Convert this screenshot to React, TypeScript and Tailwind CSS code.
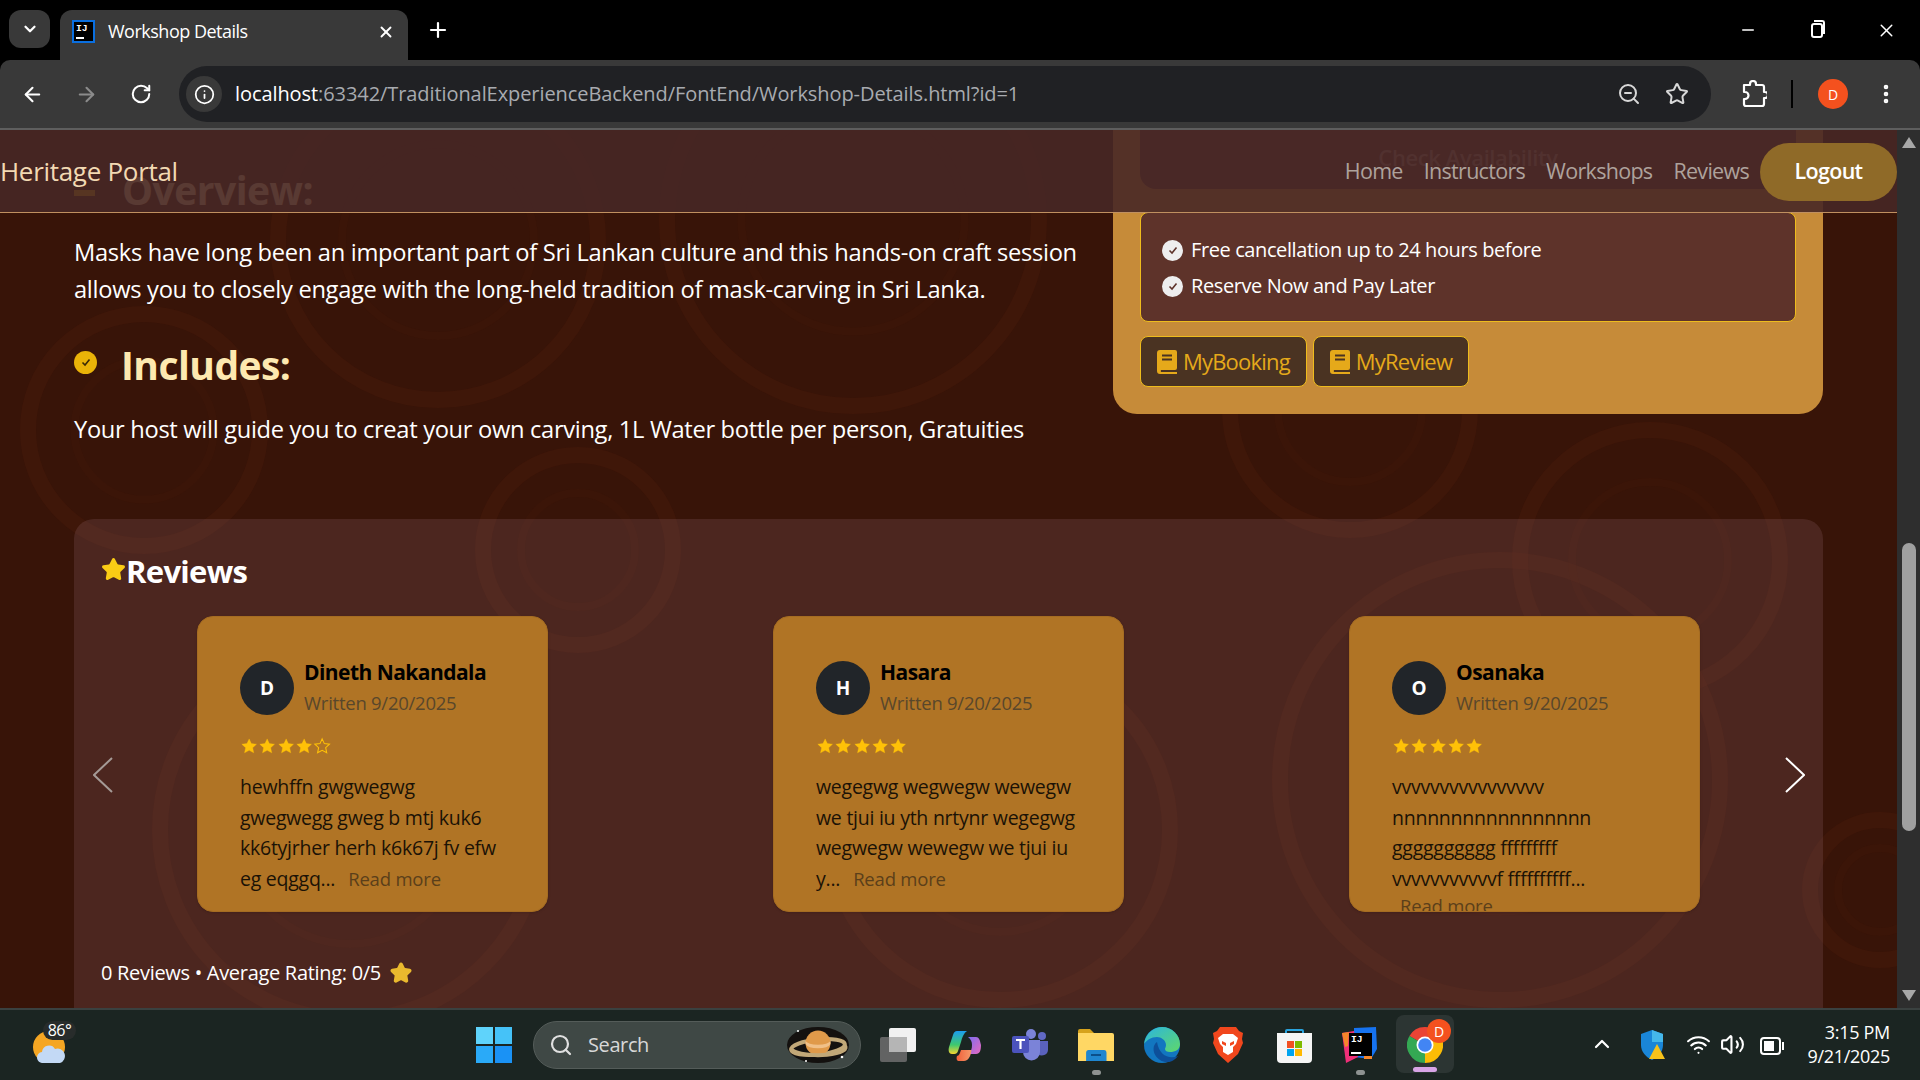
import { ArrowLeft, ArrowRight, ChevronDown, ChevronUp, Info, MoreVertical, Plus, RotateCw, Search, Star, Volume2, Wifi, X, ZoomOut, Minus } from 'lucide-react';
import type { ReactNode } from 'react';

const rings = [
  [438, 110, 160], [853, 90, 186], [144, 300, 116], [578, 420, 95], [1880, 760, 70],
  [350, 700, 190], [1000, 700, 170], [1500, 650, 220], [1650, 430, 130], [1350, 280, 120],
];

function Background() {
  return (
    <svg className="absolute inset-0 w-full h-full" viewBox="0 0 1897 878" preserveAspectRatio="none">
      {rings.map(([cx, cy, r], i) => (
        <g key={i} fill="none">
          <circle cx={cx} cy={cy} r={r} stroke="#4a1a0a" strokeWidth="16" opacity="0.45" />
          <circle cx={cx} cy={cy} r={r * 0.6} stroke="#451808" strokeWidth="8" opacity="0.25" />
        </g>
      ))}
    </svg>
  );
}

function IdeaIcon({ size, blue }: { size: number; blue?: boolean }) {
  return (
    <div
      className={`flex flex-col justify-between bg-black text-white font-bold leading-none p-[2px] font-['Liberation_Mono',monospace] ${blue ? 'border-2 border-[#0a6fe0]' : ''}`}
      style={{ width: size, height: size, fontSize: size * 0.42 }}
    >
      <span>IJ</span>
      <span className="block w-1/2 h-[2px] bg-white" />
    </div>
  );
}

function Chevron({ right, color }: { right?: boolean; color: string }) {
  return (
    <svg width="20" height="36" viewBox="0 0 20 36" className="mt-[22px] shrink-0">
      <path d={right ? 'M1 1 19 18 1 35' : 'M19 1 1 18 19 35'} fill="none" stroke={color} strokeWidth="2" />
    </svg>
  );
}

function RatingStar({ filled }: { filled: boolean }) {
  return (
    <svg width="18.300" height="18" viewBox="0 0 24 24">
      <path
        d="M12 2.500l2.900 6.300 6.900.8-5.100 4.700 1.400 6.800-6.100-3.400-6.100 3.400 1.400-6.800L2.200 9.600l6.900-.8z"
        fill={filled ? '#ffc107' : 'none'}
        stroke="#ffc107"
        strokeWidth={filled ? 0.5 : 1.4}
      />
    </svg>
  );
}

function ReviewCard({ initial, name, stars, lines, more, clipped }: { initial: string; name: string; stars: number; lines: string[]; more?: boolean; clipped?: boolean }) {
  return (
    <div className="w-[351px] h-[296px] rounded-[16px] bg-[#b07425] border border-[#a56c22] overflow-hidden pl-[42px] pt-[42px] shadow-sm">
      <div className="flex gap-[10px] h-[64px]">
        <div className="w-[54px] h-[54px] mt-[2px] rounded-full bg-[#212529] text-white font-bold text-[19px] flex items-center justify-center">{initial}</div>
        <div>
          <div className="text-[21px] leading-[26px] font-bold text-black tracking-[-0.55px]">{name}</div>
          <div className="text-[18.5px] leading-[26px] mt-[5px] text-[#59472b] tracking-[-0.25px]">Written 9/20/2025</div>
        </div>
      </div>
      <div className="flex mt-[11px] h-[24px] items-center">
        {[0, 1, 2, 3, 4].map((i) => (
          <RatingStar key={i} filled={i < stars} />
        ))}
      </div>
      <div className="mt-[14px] text-[19.5px] leading-[30.6px] text-[#1b1206] tracking-[-0.25px]">
        {lines.map((l, i) => (
          <div key={i} className="whitespace-nowrap">
            {l}
            {more && i === lines.length - 1 && <span className="ml-[13px] text-[18.5px] text-[#5b3f1a] tracking-[-0.2px]">Read more</span>}
          </div>
        ))}
        {clipped && <div className="ml-[8px] text-[18.5px] leading-[24px] text-[#5b3f1a] tracking-[-0.2px]">Read more</div>}
      </div>
    </div>
  );
}

function CheckRow({ children }: { children: ReactNode }) {
  return (
    <div className="flex items-center gap-[8px] h-[36px]">
      <div className="w-[21px] h-[21px] rounded-full bg-[#eeeeee] flex items-center justify-center">
        <svg width="12" height="12" viewBox="0 0 12 12"><path d="M2.5 6.5 5 9l4.5-5.5" fill="none" stroke="#5e332a" strokeWidth="1.6" /></svg>
      </div>
      {children}
    </div>
  );
}

// one slot on the taskbar, 66px apart, optional running dot under the icon
function TaskSlot({ children, dot }: { children: ReactNode; dot?: boolean }) {
  return (
    <div className="relative w-[66px] h-full flex items-center justify-center">
      {children}
      {dot && <span className="absolute bottom-[5px] left-[29px] w-[9px] h-[5px] rounded-full bg-[#8e9291]" />}
    </div>
  );
}

export default function App() {
  return (
    <div className="w-[1920px] h-[1080px] overflow-hidden flex flex-col bg-black font-['Open_Sans','Noto_Sans',sans-serif]">
      {/* Tab strip */}
      <div className="h-[60px] flex shrink-0 bg-black">
        <div className="w-[41px] h-[38px] mt-[10px] ml-[9px] rounded-[12px] bg-[#393939] flex items-center justify-center">
          <ChevronDown size={18} strokeWidth={3} className="text-white" />
        </div>
        <div className="w-[348px] h-[50px] mt-[10px] ml-[10px] pb-[7px] rounded-t-[12px] bg-[#393939] flex items-center pl-[12px] pr-[10px]">
          <IdeaIcon size={23} blue />
          <span className="ml-[13px] text-[18px] text-white tracking-[-0.5px]">Workshop Details</span>
          <X size={18} strokeWidth={2.5} className="text-white ml-auto mr-[3px]" />
        </div>
        <Plus size={24} strokeWidth={2.2} className="text-white mt-[18px] ml-[18px]" />
        <div className="ml-auto flex items-start text-white">
          <div className="w-[68px] h-[44px] flex items-center justify-center mt-[8px]"><Minus size={18} /></div>
          <div className="w-[70px] h-[44px] flex items-center justify-center mt-[8px]">
            <div className="relative w-[12px] h-[15px] border-2 border-white rounded-[3px] mt-[1px]">
              <span className="absolute -top-[5px] left-[1px] w-[11px] h-[14px] border-t-2 border-r-2 border-white rounded-tr-[3px]" />
            </div>
          </div>
          <div className="w-[68px] h-[44px] flex items-center justify-center mt-[8px]"><X size={21} strokeWidth={1.7} /></div>
        </div>
      </div>

      {/* Toolbar */}
      <div className="h-[70px] shrink-0 rounded-t-[10px] bg-[#393939] border-b-2 border-[#5e5e5e] flex items-center pl-[21px] pr-[20px] text-white">
        <ArrowLeft size={23} strokeWidth={2.2} />
        <ArrowRight size={23} strokeWidth={2.2} className="ml-[31px] text-[#8b8b8b]" />
        <RotateCw size={22} strokeWidth={2.2} className="ml-[32px]" />
        <div className="ml-[27px] w-[1532px] h-[56px] rounded-full bg-[#202124] flex items-center pl-[6px] pr-[22px]">
          <div className="w-[36px] h-[36px] ml-[1px] rounded-full bg-[#393939] flex items-center justify-center"><Info size={21} strokeWidth={2} /></div>
          <span className="ml-[13px] text-[20px] tracking-[-0.08px] text-white">localhost<span className="text-[#a8abb0]">:63342/TraditionalExperienceBackend/FontEnd/Workshop-Details.html?id=1</span></span>
          <ZoomOut size={24} strokeWidth={2} className="ml-auto text-[#d8d8d8]" />
          <Star size={24} strokeWidth={2} className="ml-[24px] text-[#d8d8d8]" />
        </div>
        <svg className="ml-[30px]" width="26" height="28" viewBox="0 0 26 28">
          <path d="M3 5h6V4a3 3 0 0 1 6 0v1h6a2 2 0 0 1 2 2v5h1a2.5 2.5 0 0 1 0 6h-1v6a2 2 0 0 1-2 2H5a2 2 0 0 1-2-2v-5h1a3 3 0 0 0 0-7H3z" fill="none" stroke="#fff" strokeWidth="2.2" strokeLinejoin="round" />
        </svg>
        <span className="ml-[24px] w-[2px] h-[28px] bg-black" />
        <div className="ml-[25px] w-[30px] h-[30px] rounded-full bg-[#f4511e] flex items-center justify-center text-[14px]">D</div>
        <MoreVertical size={24} strokeWidth={2.6} className="ml-[26px]" />
      </div>

      {/* Page */}
      <div className="flex-1 min-h-0 flex">
        <div className="relative flex-1 overflow-hidden bg-[#381408]">
          <Background />

          <div className="relative pl-[74px] pr-[74px]">
            <div className="flex justify-between items-start">
              <div className="w-[1010px] pt-[35px]">
                <div className="flex items-center h-[50px]">
                  <span className="w-[21px] h-[6px] mt-[6px] bg-[#eab308]" />
                  <span className="ml-[27px] text-[39px] font-bold text-[#fde9b0] tracking-[-0.5px]">Overview:</span>
                </div>
                <p className="mt-[19px] text-[23.7px] leading-[36.7px] text-white tracking-[-0.3px]">
                  Masks have long been an important part of Sri Lankan culture and this hands-on craft session allows you to closely engage with the long-held tradition of mask-carving in Sri Lanka.
                </p>
                <div className="flex items-center mt-[33px] h-[50px]">
                  <div className="w-[23px] h-[23px] mt-[-6px] rounded-full bg-[#eab308] flex items-center justify-center">
                    <svg width="12" height="12" viewBox="0 0 12 12"><path d="M2.5 6.5 5 9l4.5-5.5" fill="none" stroke="#3a2a05" strokeWidth="1.6" /></svg>
                  </div>
                  <h2 className="ml-[24px] text-[39px] font-bold text-[#fde9b0] tracking-[-0.55px]">Includes:</h2>
                </div>
                <p className="mt-[21px] text-[23.7px] leading-[36.7px] text-white tracking-[-0.32px]">
                  Your host will guide you to creat your own carving, 1L Water bottle per person, Gratuities
                </p>
              </div>

              <div className="w-[710px] h-[284px] rounded-b-[24px] bg-[#c68b39] px-[27px]">
                <div className="h-[59px] rounded-b-[16px] bg-[#5c3329] pt-[11px] text-center text-[#a89088] text-[22px] font-semibold tracking-[-0.4px]">Check Availability</div>
                <div className="mt-[23px] h-[110px] rounded-[8px] border border-[#eebc1d] bg-[#5e332a] pl-[21px] pt-[19px] text-white text-[20px] tracking-[-0.4px]">
                  <CheckRow>Free cancellation up to 24 hours before</CheckRow>
                  <CheckRow>Reserve Now and Pay Later</CheckRow>
                </div>
                <div className="flex gap-[6px] mt-[14px]">
                  {['MyBooking', 'MyReview'].map((label) => (
                    <div key={label} className="h-[51px] px-[16px] rounded-[8px] border border-[#eebc1d] bg-[#4a3322] text-[#e5a91a] text-[22px] tracking-[-0.8px] flex items-center gap-[6px]">
                      <svg width="20" height="24" viewBox="0 0 20 24">
                        <path d="M3 0h15a2 2 0 0 1 2 2v16a2 2 0 0 1-2 2H4a2 2 0 0 0 0 2h16v2H3a3 3 0 0 1-3-3V3a3 3 0 0 1 3-3z" fill="#e5a91a" />
                        <path d="M5 5.5h10M5 9.5h10" stroke="#4a3322" strokeWidth="2" />
                      </svg>
                      {label}
                    </div>
                  ))}
                </div>
              </div>
            </div>

            {/* Reviews panel */}
            <div className="mt-[71px] h-[560px] rounded-[20px] bg-[#ffd2eb]/10 pl-[27px]">
              <h2 className="pt-[32px] flex items-center text-[31px] leading-[40px] font-bold text-white tracking-[-0.7px]">
                <Star size={25} fill="#facc15" className="text-[#facc15] -mt-[4px]" />
                Reviews
              </h2>
              <div className="flex items-center mt-[25px] -ml-[27px]">
                <div className="ml-[19px]"><Chevron color="#a59a96" /></div>
                <div className="ml-[84px] flex gap-[225px]">
                  <ReviewCard initial="D" name="Dineth Nakandala" stars={4} more lines={['hewhffn gwgwegwg', 'gwegwegg gweg b mtj kuk6', 'kk6tyjrher herh k6k67j fv efw', 'eg eqggq...']} />
                  <ReviewCard initial="H" name="Hasara" stars={5} more lines={['wegegwg wegwegw wewegw', 'we tjui iu yth nrtynr wegegwg', 'wegwegw wewegw we tjui iu', 'y...']} />
                  <ReviewCard initial="O" name="Osanaka" stars={5} clipped lines={['vvvvvvvvvvvvvvvv', 'nnnnnnnnnnnnnnnnn', 'gggggggggg fffffffff', 'vvvvvvvvvvvf ffffffffff...']} />
                </div>
                <div className="ml-[85px]"><Chevron right color="#ffffff" /></div>
              </div>
              <div className="mt-[46px] flex items-center text-[20px] text-white tracking-[-0.3px]">
                0 Reviews • Average Rating: 0/5
                <Star size={22} fill="#eab92e" strokeLinejoin="round" strokeWidth={3} className="ml-[9px] text-[#eab92e]" />
              </div>
            </div>
          </div>

          {/* Translucent fixed nav */}
          <div className="absolute top-0 left-0 right-0 h-[83px] bg-[#472726]/90 border-b border-[#c09060] flex items-center">
            <span className="text-[26px] text-[#f2d9b3] tracking-[-0.3px]">Heritage Portal</span>
            <div className="ml-auto flex items-center text-[21.5px] text-[#aea29c] tracking-[-0.7px]">
              <span>Home</span>
              <span className="ml-[21px]">Instructors</span>
              <span className="ml-[21px]">Workshops</span>
              <span className="ml-[21px]">Reviews</span>
              <div className="ml-[11px] mt-[1px] w-[137px] h-[58px] rounded-full bg-[#8f6a28] text-white font-semibold flex items-center justify-center">Logout</div>
            </div>
          </div>
        </div>

        {/* Scrollbar */}
        <div className="w-[23px] shrink-0 bg-[#2e2e2e] flex flex-col items-center py-[4px] text-[#a8a8a8]">
          <div className="w-0 h-0 border-x-[7px] border-x-transparent border-b-[11px] border-b-[#a8a8a8] mt-[3px]" />
          <div className="w-[14px] h-[288px] mt-[395px] rounded-full bg-[#a0a0a0]" />
          <div className="w-0 h-0 border-x-[7px] border-x-transparent border-t-[11px] border-t-[#a8a8a8] mt-auto mb-[3px]" />
        </div>
      </div>

      {/* Taskbar */}
      <div className="h-[72px] shrink-0 bg-[#1b2522] border-t-2 border-[#3a4140] flex items-center relative text-white">
        <div className="relative ml-[32px] w-[36px] h-[50px]">
          <div className="absolute left-[1px] top-[11px] w-[32px] h-[32px] rounded-full bg-[#f5a623]" />
          <svg className="absolute left-[5px] top-[23px]" width="28" height="20" viewBox="0 0 28 20">
            <path d="M6 20a5.500 5.500 0 0 1-1-11 7 7 0 0 1 13-3 6.500 6.500 0 0 1 5 14z" fill="#c3d9f5" />
          </svg>
          <span className="absolute left-[11px] top-[1px] w-[33px] h-[19px] rounded-full bg-[#282c2b] text-[16px] leading-[19px] text-center tracking-[-0.5px]">86°</span>
        </div>

        {/* Windows logo */}
        <div className="ml-[393px] w-[66px] flex justify-center">
          <div className="grid grid-cols-2 gap-[2px] w-[36px] h-[36px]">
            <span className="bg-[#5fd3fb]" />
            <span className="bg-[#45c2f8]" />
            <span className="bg-[#2aaaf8]" />
            <span className="bg-[#1a92f5]" />
          </div>
        </div>

        <div className="ml-[6px] w-[328px] h-[48px] rounded-full bg-[#3f4845] border border-[#545c59] flex items-center pl-[15px] pr-[8px]">
          <Search size={24} strokeWidth={2.2} className="text-[#e0e0e0]" />
          <span className="ml-[15px] text-[20px] text-[#d8d8d8] tracking-[-0.4px]">Search</span>
          <svg className="ml-auto" width="68" height="44" viewBox="0 0 68 44">
            <ellipse cx="34" cy="22" rx="31" ry="18" fill="#14110f" />
            <ellipse cx="34" cy="24" rx="27" ry="7.500" fill="none" stroke="#c2a878" strokeWidth="4" transform="rotate(-6 34 24)" />
            <circle cx="34" cy="20" r="12.500" fill="#e09a4a" />
            <path d="M21.500 18a13 5 0 0 0 25 0v3a13 6 0 0 1-25 0z" fill="#f0c088" />
            <path d="M8 27a27 7.500 0 0 0 52-5" fill="none" stroke="#c2a878" strokeWidth="4" />
            <circle cx="14" cy="8" r="1" fill="#fff" /><circle cx="58" cy="34" r="1.300" fill="#fff" /><circle cx="22" cy="38" r="1" fill="#fff" />
          </svg>
        </div>

        <div className="ml-[4px] h-full flex">
          {/* Task view */}
          <TaskSlot>
            <svg width="36" height="34" viewBox="0 0 36 34">
              <rect x="9" y="0" width="27" height="24" rx="2" fill="#f1f1f1" />
              <rect x="0" y="9" width="27" height="25" rx="2" fill="#6a6a6a" fillOpacity="0.9" />
              <rect x="9" y="9" width="18" height="15" fill="#b5b5b5" />
            </svg>
          </TaskSlot>
          {/* Copilot */}
          <TaskSlot>
            <svg width="33" height="31" viewBox="0 0 33 31">
              <defs>
                <linearGradient id="cpa" x1="0" y1="0" x2="0" y2="1"><stop offset="0" stopColor="#1c9cf0" /><stop offset="0.6" stopColor="#3ec86e" /><stop offset="1" stopColor="#f5d531" /></linearGradient>
                <linearGradient id="cpb" x1="0" y1="0" x2="1" y2="1"><stop offset="0" stopColor="#7c6cf0" /><stop offset="1" stopColor="#e86ac0" /></linearGradient>
                <linearGradient id="cpc" x1="0" y1="0" x2="1" y2="0"><stop offset="0" stopColor="#f0603a" /><stop offset="1" stopColor="#f59a6a" /></linearGradient>
              </defs>
              <path d="M9 1h10c-3 2-5 6-6 11l-3 9c-1 3-3 3-5 3H4c-3 0-4-3-3-7L5 5c1-3 2-4 4-4z" fill="url(#cpa)" />
              <path d="M20 7h8c3 0 4 3 5 8 0 5-1 9-5 9h-8c3-2 4-5 4-9 0-3-1-6-4-8z" fill="url(#cpb)" />
              <path d="M13 20h10c1 0 0 1 0 3-1 4-3 8-7 8h-5c-2 0-3-2-2-5 2 0 3-3 4-6z" fill="url(#cpc)" />
            </svg>
          </TaskSlot>
          {/* Teams */}
          <TaskSlot>
            <svg width="36" height="32" viewBox="0 0 36 32">
              <circle cx="19" cy="5" r="5" fill="#7b83d8" />
              <circle cx="30" cy="7" r="4" fill="#6068c4" />
              <path d="M25 12h11v9a6 6 0 0 1-10 4z" fill="#5a62bd" />
              <path d="M11 11h17v12a8.500 8.500 0 0 1-17 0z" fill="#7b83d8" />
              <rect x="0" y="7" width="17" height="17" rx="2" fill="#4b53bc" />
              <path d="M4 11h9M8.500 11v9" stroke="#fff" strokeWidth="2.2" />
            </svg>
          </TaskSlot>
          {/* Explorer */}
          <TaskSlot dot>
            <svg width="36" height="32" viewBox="0 0 36 32">
              <path d="M0 2a2 2 0 0 1 2-2h10l4 4v3H0z" fill="#d6a21c" />
              <path d="M0 4h34a2 2 0 0 1 2 2v26H0z" fill="#ffd764" />
              <path d="M6 32v-8a3 3 0 0 1 3-3h18a3 3 0 0 1 3 3v8z" fill="#1f86d0" transform="translate(3 0) scale(0.85 1)" />
              <rect x="13" y="25" width="10" height="2" fill="#0b4f8a" />
            </svg>
          </TaskSlot>
          {/* Edge */}
          <TaskSlot>
            <svg width="36" height="36" viewBox="0 0 36 36">
              <defs>
                <linearGradient id="edg" x1="0" y1="0" x2="1" y2="1"><stop offset="0" stopColor="#2bb5e0" /><stop offset="1" stopColor="#5fd86a" /></linearGradient>
              </defs>
              <circle cx="18" cy="18" r="18" fill="#1276c0" />
              <path d="M0 17C2 5 11 0 18 0c10 0 18 8 18 17 0 6-5 8-10 8-3 0-5-1-5-3 0-1 1-2 1-4 0-5-5-8-9-8-6 0-10 3-13 7z" fill="url(#edg)" />
              <path d="M13 15c-5 3-5 13 3 18 6 4 14 2 18-4-9 4-19-1-21-14z" fill="#0d4f9a" />
            </svg>
          </TaskSlot>
          {/* Brave */}
          <TaskSlot>
            <svg width="30" height="36" viewBox="0 0 30 36">
              <path d="M7 0h16l3 4 4 2-1 6 1 4-5 11-10 9-10-9L0 16l1-4L0 6l4-2z" fill="#f1471d" />
              <path d="M5 11l5-4h10l5 4-2 6-3 3v5l-5 3-5-3v-5l-3-3z" fill="#fff" />
              <path d="M9 14l4 2v3l-4-2zM21 14l-4 2v3l4-2z" fill="#f1471d" />
            </svg>
          </TaskSlot>
          {/* Store */}
          <TaskSlot>
            <svg width="35" height="35" viewBox="0 0 35 35">
              <path d="M9 7V3a1 1 0 0 1 1-1h15a1 1 0 0 1 1 1v4" fill="none" stroke="#2aa3dd" strokeWidth="2" />
              <path d="M0 5h35v26a4 4 0 0 1-4 4H4a4 4 0 0 1-4-4z" fill="#f5f5f5" />
              <rect x="10" y="13" width="7" height="7" fill="#f25022" />
              <rect x="18" y="13" width="7" height="7" fill="#7fba00" />
              <rect x="10" y="21" width="7" height="7" fill="#00a4ef" />
              <rect x="18" y="21" width="7" height="7" fill="#ffb900" />
            </svg>
          </TaskSlot>
          {/* IntelliJ */}
          <TaskSlot dot>
            <div className="relative w-[36px] h-[36px]">
              <svg className="absolute inset-0" width="36" height="36" viewBox="0 0 36 36">
                <path d="M12 1 34 0l1 22-6 10-17-2z" fill="#1673f0" />
                <path d="M0 6l12-2 4 26-12 6z" fill="#ef2f78" />
                <path d="M0 6l7-1-1 14-3 1z" fill="#f5862a" />
                <path d="M22 28h8v4h-8z" fill="#f5862a" />
              </svg>
              <div className="absolute left-[7px] top-[6px]"><IdeaIcon size={23} /></div>
            </div>
          </TaskSlot>
          {/* Chrome */}
          <div className="relative w-[58px] h-[58px] mt-[5px] ml-[3px] rounded-[8px] bg-[#2c3533] flex items-center justify-center">
            <svg width="36" height="36" viewBox="0 0 36 36" className="mr-[1px] mt-[2px]">
              <path d="M18 18 2.410 9A18 18 0 0 1 33.590 9Z" fill="#ea4335" />
              <path d="M18 18 33.590 9A18 18 0 0 1 18 36Z" fill="#fbbc05" />
              <path d="M18 18 18 36A18 18 0 0 1 2.410 9Z" fill="#34a853" />
              <circle cx="18" cy="18" r="8.500" fill="#fff" />
              <circle cx="18" cy="18" r="6.800" fill="#4285f4" />
            </svg>
            <div className="absolute right-[3px] top-[4px] w-[24px] h-[24px] rounded-full bg-[#f4511e] text-[14px] flex items-center justify-center">D</div>
            <span className="absolute bottom-[1px] left-[17px] w-[24px] h-[5px] rounded-full bg-[#d8a4e6]" />
          </div>
        </div>

        {/* Tray */}
        <ChevronUp size={24} strokeWidth={2.2} className="absolute left-[1590px] top-[22px]" />
        <svg className="absolute left-[1640px] top-[20px]" width="26" height="30" viewBox="0 0 26 30">
          <path d="M12 0l11 4v11c0 7-5 12-11 15C6 27 1 22 1 15V4z" fill="#1a86d8" />
          <path d="M12 0l11 4v8H12z" fill="#45b7ea" />
          <path d="M17 14l8 15H9z" fill="#f7c21b" />
        </svg>
        <Wifi size={25} className="absolute left-[1686px] top-[22px]" />
        <Volume2 size={25} className="absolute left-[1720px] top-[22px]" />
        <div className="absolute left-[1760px] top-[27px] w-[21px] h-[18px] rounded-[4px] border-2 border-white p-[2px]">
          <div className="w-[10px] h-full bg-white" />
          <span className="absolute -right-[5px] top-[3px] w-[2px] h-[8px] bg-white" />
        </div>
        <div className="absolute right-[30px] top-[10px] text-right text-[18px] leading-[24px] tracking-[-0.3px]">
          <div>3:15 PM</div>
          <div>9/21/2025</div>
        </div>
      </div>
    </div>
  );
}
